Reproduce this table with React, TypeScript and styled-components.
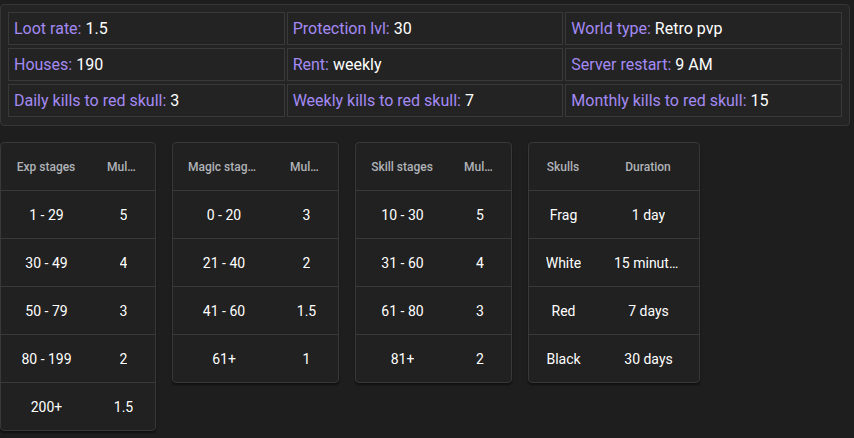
import React from "react";
import styled, { createGlobalStyle } from "styled-components";

const Global = createGlobalStyle`
  html, body { margin: 0; padding: 0; background: #1e1e1e; }
  body { font-family: Roboto, "Liberation Sans", sans-serif; color: #fff; }
`;

const Page = styled.div`
  width: 854px;
  height: 438px;
  overflow: hidden;
  box-sizing: border-box;
  padding: 4px 4px 0 0;
  display: flex;
  flex-direction: column;
  gap: 16px;
`;

const InfoPanel = styled.div`
  box-sizing: border-box;
  width: 850px;
  border: 1px solid #363636;
  border-radius: 4px;
  background: #242424;
  padding: 7px 7px 8px;
  display: grid;
  grid-template-columns: repeat(3, 1fr);
  column-gap: 2px;
  row-gap: 3px;
`;

const InfoCell = styled.div`
  box-sizing: border-box;
  height: 33px;
  border: 1px solid #393939;
  background: #232323;
  display: flex;
  align-items: center;
  padding: 0 5px;
  font-size: 16px;
  white-space: nowrap;
`;

const Label = styled.span`
  color: #a48af4;
`;

const Value = styled.span`
  color: #ffffff;
  margin-left: 4px;
`;

const Tables = styled.div`
  display: flex;
  gap: 16px;
  align-items: flex-start;
`;

const Table = styled.div<{ $cols: string }>`
  display: grid;
  grid-template-columns: ${(p) => p.$cols};
  border: 1px solid #383838;
  border-radius: 4px;
  background: #212121;
  box-shadow: 0 2px 2px rgba(0, 0, 0, 0.45);
  overflow: hidden;
`;

const HeadCell = styled.div`
  height: 47px;
  display: flex;
  align-items: center;
  justify-content: center;
  padding: 0 16px 0 15px;
  font-size: 12px;
  font-weight: 500;
  color: #b0b3b8;
  min-width: 0;
  border-bottom: 1px solid #3a3a3a;
`;

const Cell = styled.div<{ $last: boolean }>`
  height: 47px;
  display: flex;
  align-items: center;
  justify-content: center;
  padding: 0 16px;
  font-size: 14px;
  color: #ffffff;
  min-width: 0;
  border-bottom: ${(p) => (p.$last ? "none" : "1px solid #3a3a3a")};
`;

const Clip = styled.span`
  white-space: nowrap;
  overflow: hidden;
  text-overflow: ellipsis;
`;

const info: [string, string][] = [
  ["Loot rate:", "1.5"],
  ["Protection lvl:", "30"],
  ["World type:", "Retro pvp"],
  ["Houses:", "190"],
  ["Rent:", "weekly"],
  ["Server restart:", "9 AM"],
  ["Daily kills to red skull:", "3"],
  ["Weekly kills to red skull:", "7"],
  ["Monthly kills to red skull:", "15"],
];

type T = { cols: string; head: [string, string]; rows: [string, string][] };

const tables: T[] = [
  {
    cols: "91px 63px",
    head: ["Exp stages", "Multiplier"],
    rows: [
      ["1 - 29", "5"],
      ["30 - 49", "4"],
      ["50 - 79", "3"],
      ["80 - 199", "2"],
      ["200+", "1.5"],
    ],
  },
  {
    cols: "102px 63px",
    head: ["Magic stages", "Multiplier"],
    rows: [
      ["0 - 20", "3"],
      ["21 - 40", "2"],
      ["41 - 60", "1.5"],
      ["61+", "1"],
    ],
  },
  {
    cols: "93px 62px",
    head: ["Skill stages", "Multiplier"],
    rows: [
      ["10 - 30", "5"],
      ["31 - 60", "4"],
      ["61 - 80", "3"],
      ["81+", "2"],
    ],
  },
  {
    cols: "69px 101px",
    head: ["Skulls", "Duration"],
    rows: [
      ["Frag", "1 day"],
      ["White", "15 minutes"],
      ["Red", "7 days"],
      ["Black", "30 days"],
    ],
  },
];

export default function App() {
  return (
    <>
      <Global />
      <Page>
        <InfoPanel>
          {info.map(([l, v]) => (
            <InfoCell key={l}>
              <Label>{l}</Label>
              <Value>{v}</Value>
            </InfoCell>
          ))}
        </InfoPanel>
        <Tables>
          {tables.map((t) => (
            <Table key={t.head[0]} $cols={t.cols}>
              <HeadCell>
                <Clip>{t.head[0]}</Clip>
              </HeadCell>
              <HeadCell>
                <Clip>{t.head[1]}</Clip>
              </HeadCell>
              {t.rows.map((r, i) =>
                r.map((c, j) => (
                  <Cell key={`${i}-${j}`} $last={i === t.rows.length - 1}>
                    <Clip>{c}</Clip>
                  </Cell>
                ))
              )}
            </Table>
          ))}
        </Tables>
      </Page>
    </>
  );
}
